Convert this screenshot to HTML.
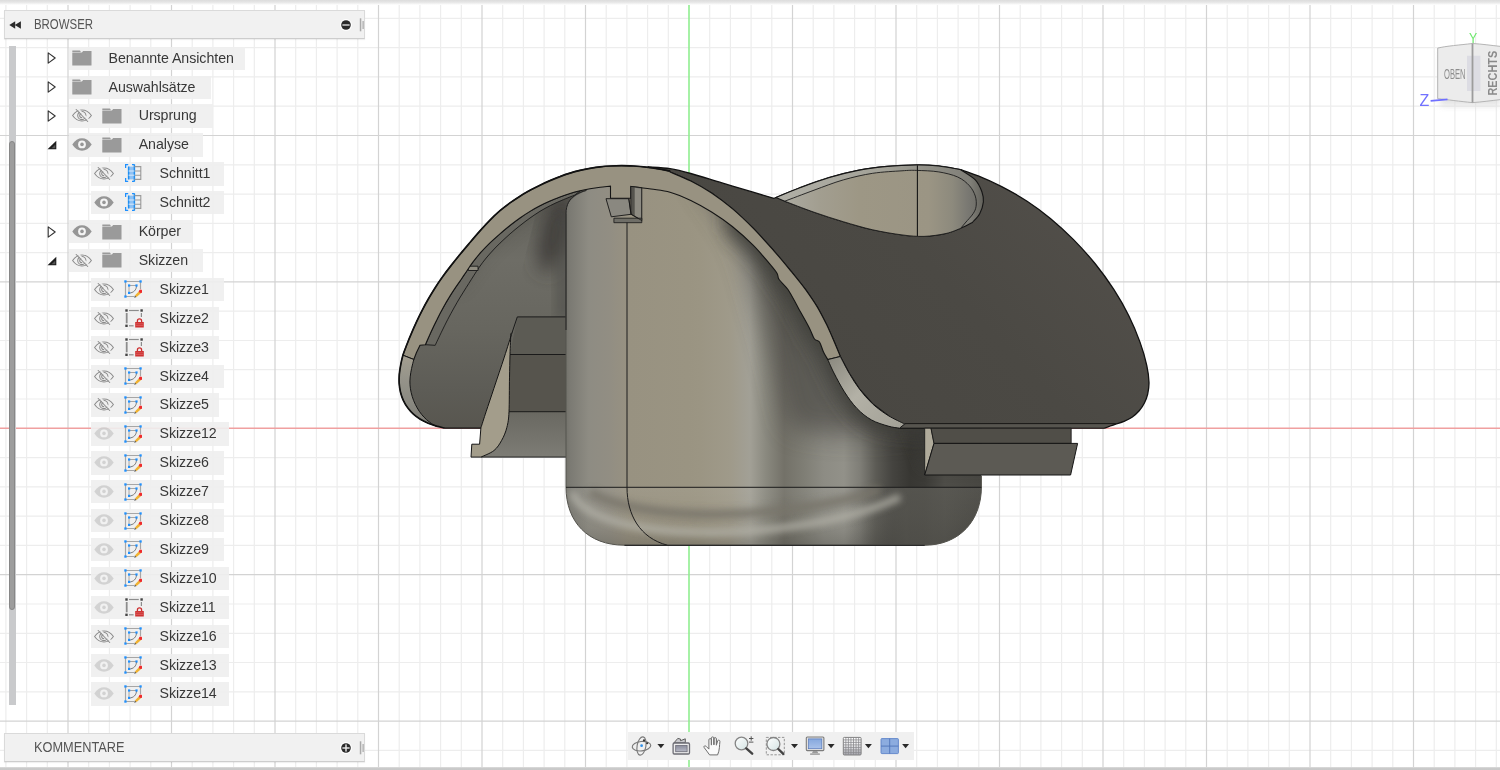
<!DOCTYPE html>
<html lang="de"><head><meta charset="utf-8"><title>Fusion</title>
<style>
html,body{margin:0;padding:0;background:#fff;overflow:hidden}
body{width:1500px;height:770px;position:relative;font-family:"Liberation Sans",sans-serif;color:#333}
#canvas{position:absolute;left:0;top:0;width:1500px;height:770px;will-change:transform}
#topstrip{position:absolute;left:0;top:0;width:1500px;height:5px;background:linear-gradient(#dcdcdc,#e6e6e6 45%,#fff)}
#botstrip{position:absolute;left:0;top:767px;width:1500px;height:3px;background:linear-gradient(#dedede,#cacaca 45%,#c8c8c8)}
</style></head><body>
<svg id="canvas" width="1500" height="770" viewBox="0 0 1500 770">
<path d="M5.9 0V770M26.6 0V770M47.3 0V770M88.7 0V770M109.4 0V770M130.1 0V770M150.8 0V770M192.2 0V770M212.9 0V770M233.6 0V770M254.3 0V770M295.7 0V770M316.4 0V770M337.1 0V770M357.8 0V770M399.2 0V770M419.9 0V770M440.6 0V770M461.3 0V770M502.7 0V770M523.4 0V770M544.1 0V770M564.8 0V770M606.2 0V770M626.9 0V770M647.6 0V770M668.3 0V770M709.7 0V770M730.4 0V770M751.1 0V770M771.8 0V770M813.2 0V770M833.9 0V770M854.6 0V770M875.3 0V770M916.7 0V770M937.4 0V770M958.1 0V770M978.8 0V770M1020.2 0V770M1040.9 0V770M1061.6 0V770M1082.3 0V770M1123.7 0V770M1144.4 0V770M1165.1 0V770M1185.8 0V770M1227.2 0V770M1247.9 0V770M1268.6 0V770M1289.3 0V770M1330.7 0V770M1351.4 0V770M1372.1 0V770M1392.8 0V770M1434.2 0V770M1454.9 0V770M1475.6 0V770M1496.3 0V770M0 18.4H1500M0 47.7H1500M0 76.9H1500M0 106.2H1500M0 164.8H1500M0 194.1H1500M0 223.3H1500M0 252.6H1500M0 311.2H1500M0 340.5H1500M0 369.7H1500M0 399.0H1500M0 457.6H1500M0 486.9H1500M0 516.1H1500M0 545.4H1500M0 604.0H1500M0 633.3H1500M0 662.5H1500M0 691.8H1500M0 750.4H1500" stroke="#ededed" stroke-width="1.2" fill="none"/>
<path d="M68.0 0V770M171.5 0V770M275.0 0V770M378.5 0V770M482.0 0V770M585.5 0V770M792.5 0V770M896.0 0V770M999.5 0V770M1103.0 0V770M1206.5 0V770M1310.0 0V770M1413.5 0V770M0 135.5H1500M0 281.9H1500M0 574.7H1500M0 721.1H1500" stroke="#d3d3d3" stroke-width="1.2" fill="none"/>
<path d="M0 428.3H1500" stroke="#f0a0a0" stroke-width="1.4" fill="none"/>
<path d="M689.0 0V770" stroke="#90ee90" stroke-width="1.6" fill="none"/>

<defs>
<linearGradient id="gcyl" gradientUnits="userSpaceOnUse" x1="566" y1="0" x2="981.4" y2="0">
<stop offset="0" stop-color="#74736c"/><stop offset="0.010" stop-color="#7b7a73"/><stop offset="0.055" stop-color="#8e8c83"/><stop offset="0.106" stop-color="#928e83"/><stop offset="0.152" stop-color="#989281"/><stop offset="0.294" stop-color="#9a9482"/><stop offset="0.323" stop-color="#9b9583"/><stop offset="0.395" stop-color="#9f9a8a"/><stop offset="0.443" stop-color="#a2a096"/><stop offset="0.481" stop-color="#8a897f"/><stop offset="0.525" stop-color="#737168"/><stop offset="0.573" stop-color="#7f7e75"/><stop offset="0.621" stop-color="#8d8c84"/><stop offset="0.669" stop-color="#929189"/><stop offset="0.708" stop-color="#7f7e77"/><stop offset="0.746" stop-color="#5c5b55"/><stop offset="0.785" stop-color="#454440"/><stop offset="0.828" stop-color="#383733"/><stop offset="0.864" stop-color="#3c3b37"/><stop offset="0.912" stop-color="#4e4d48"/><stop offset="1.000" stop-color="#484742"/>
</linearGradient>
<linearGradient id="gfil" gradientUnits="userSpaceOnUse" x1="0" y1="487" x2="0" y2="546">
<stop offset="0" stop-color="#fff" stop-opacity=".06"/><stop offset=".3" stop-color="#fff" stop-opacity=".03"/><stop offset=".7" stop-color="#000" stop-opacity=".04"/><stop offset="1" stop-color="#000" stop-opacity=".16"/>
</linearGradient>
<linearGradient id="gint" gradientUnits="userSpaceOnUse" x1="0" y1="200" x2="0" y2="430">
<stop offset="0" stop-color="#63625b"/><stop offset=".26" stop-color="#6e6d66"/><stop offset=".56" stop-color="#67665f"/><stop offset=".83" stop-color="#5d5c56"/><stop offset="1" stop-color="#58564f"/>
</linearGradient>
<linearGradient id="gblk" gradientUnits="userSpaceOnUse" x1="0" y1="411" x2="0" y2="457"><stop offset="0" stop-color="#696861"/><stop offset="1" stop-color="#7d7c75"/></linearGradient>
<linearGradient id="grim" gradientUnits="userSpaceOnUse" x1="780" y1="0" x2="985" y2="0"><stop offset="0" stop-color="#b0afa6"/><stop offset=".5" stop-color="#a3a298"/><stop offset=".8" stop-color="#8a8981"/><stop offset=".93" stop-color="#7f7e77"/><stop offset="1" stop-color="#5f5e58"/></linearGradient>
<linearGradient id="glipl" gradientUnits="userSpaceOnUse" x1="0" y1="356" x2="0" y2="428"><stop offset="0" stop-color="#a39e90"/><stop offset=".3" stop-color="#96948a"/><stop offset=".65" stop-color="#8a8981"/><stop offset="1" stop-color="#7a7972"/></linearGradient>
<linearGradient id="gshell" gradientUnits="userSpaceOnUse" x1="1100" y1="200" x2="850" y2="430"><stop offset="0" stop-color="#524f4a"/><stop offset=".5" stop-color="#4b4944"/><stop offset="1" stop-color="#494742"/></linearGradient>
<linearGradient id="gfilr" gradientUnits="userSpaceOnUse" x1="850" y1="0" x2="985" y2="0"><stop offset="0" stop-color="#5c5b55" stop-opacity="0"/><stop offset=".42" stop-color="#5c5b55" stop-opacity=".7"/><stop offset=".62" stop-color="#5a5953" stop-opacity=".7"/><stop offset="1" stop-color="#55544e" stop-opacity=".3"/></linearGradient>
<linearGradient id="gscoop" gradientUnits="userSpaceOnUse" x1="780" y1="0" x2="978" y2="0">
<stop offset="0" stop-color="#adaca3"/><stop offset=".2" stop-color="#a29e90"/><stop offset=".4" stop-color="#9d9785"/><stop offset=".75" stop-color="#9b9584"/><stop offset=".87" stop-color="#8d8a7d"/><stop offset=".95" stop-color="#797872"/><stop offset="1" stop-color="#6f6e68"/>
</linearGradient>
<linearGradient id="glipr" gradientUnits="userSpaceOnUse" x1="830" y1="360" x2="900" y2="428">
<stop offset="0" stop-color="#8d8b81"/><stop offset=".45" stop-color="#b3b1a6"/><stop offset="1" stop-color="#a3a197"/>
</linearGradient>
<filter id="blur12" x="-30%" y="-30%" width="160%" height="160%"><feGaussianBlur stdDeviation="13"/></filter>
<filter id="blur9" x="-30%" y="-30%" width="160%" height="160%"><feGaussianBlur stdDeviation="9"/></filter>
<filter id="blur4" x="-30%" y="-100%" width="160%" height="300%"><feGaussianBlur stdDeviation="3.500"/></filter>
<filter id="blur6" x="-30%" y="-30%" width="160%" height="160%"><feGaussianBlur stdDeviation="6"/></filter>
<clipPath id="ccyl"><path id="cylp" d="M566 487V214C566 203 571 197 586.4 190.500L600 176L700 185L800 285L850 400L900 426H981.4V487C981.4 520 960 545.2 924.7 545.2H624.4C588 545.2 566 522 566 487Z"/></clipPath>
<clipPath id="cint"><path id="intp" d="M444.8 428.2C443.4 427.8 439.2 426.9 436.5 426.1C433.7 425.2 430.9 424.3 428.2 423.2C425.5 422.0 422.8 420.8 420.3 419.2C417.9 417.7 415.5 416.0 413.4 414.1C411.3 412.2 409.4 410.0 407.7 407.7C406.0 405.4 404.5 402.9 403.3 400.3C402.1 397.7 401.2 395.0 400.5 392.2C399.8 389.4 399.4 386.5 399.2 383.5C399.0 380.5 399.1 377.5 399.3 374.4C399.6 371.3 400.1 368.1 400.7 364.9C401.3 361.7 401.9 358.5 402.9 355.2C403.9 351.9 405.2 348.8 406.6 345.3C407.9 341.9 409.3 338.2 411.0 334.4C412.6 330.5 414.4 326.4 416.3 322.3C418.2 318.2 420.3 313.9 422.4 309.9C424.5 305.8 426.7 301.8 428.9 298.0C431.1 294.2 433.3 290.7 435.5 287.2C437.8 283.6 440.1 280.3 442.6 276.8C445.1 273.3 447.8 269.7 450.8 265.9C453.7 262.2 456.9 258.2 460.1 254.3C463.3 250.4 466.7 246.4 470.0 242.5C473.3 238.6 476.7 234.6 480.0 230.9C483.3 227.2 486.7 223.4 490.0 220.1C493.3 216.7 496.7 213.6 500.0 210.7C503.3 207.9 506.7 205.3 510.0 202.9C513.3 200.5 516.7 198.3 520.0 196.2C523.3 194.1 526.7 192.2 530.0 190.3C533.3 188.5 536.7 186.8 540.0 185.2C543.3 183.6 546.7 182.0 550.0 180.6C553.3 179.2 556.7 177.8 560.0 176.6C563.3 175.3 566.7 174.1 570.0 173.1C573.3 172.1 576.7 171.2 580.0 170.4C583.3 169.6 586.7 168.9 590.0 168.3C593.3 167.8 596.6 167.3 600.1 166.9C603.5 166.5 606.8 166.2 610.4 166.0C614.0 165.8 617.7 165.6 621.6 165.6C625.4 165.6 629.6 165.8 633.7 166.0C637.8 166.3 642.2 166.7 646.3 167.2C650.4 167.7 654.5 168.3 658.5 169.0C662.4 169.6 668.1 170.7 670.0 171.0L670 430L481 428.2Z"/></clipPath>
</defs>
<g stroke-linejoin="round">
<use href="#intp" fill="url(#gint)"/>
<g clip-path="url(#cint)">
<path d="M455.8 287.1C456.7 285.8 459.5 281.8 461.3 279.2C463.1 276.5 464.8 274.0 466.7 271.2C468.6 268.4 470.4 265.5 472.7 262.4C475.0 259.3 477.7 256.0 480.5 252.7C483.4 249.4 486.8 246.0 490.0 242.8C493.3 239.7 496.7 236.7 500.0 233.8C503.4 230.9 506.7 228.2 510.0 225.5C513.3 222.9 516.7 220.3 520.0 218.0C523.3 215.6 526.7 213.4 530.0 211.4C533.4 209.3 536.7 207.5 540.0 205.8C543.4 204.0 546.7 202.4 550.0 201.0C553.4 199.5 556.7 198.2 560.0 196.9C563.3 195.7 566.7 194.5 570.0 193.5C573.3 192.5 576.7 191.6 580.0 190.8C583.3 190.0 586.7 189.3 590.0 188.7C593.4 188.1 596.8 187.6 600.2 187.2C603.6 186.8 608.8 186.3 610.5 186.1L620 150L440 150L440 280Z" fill="#3d3c38" filter="url(#blur9)" transform="translate(2,2)" opacity=".35"/>
<ellipse cx="555" cy="232" rx="14" ry="42" fill="#3f3e3a" filter="url(#blur9)" opacity=".95" transform="rotate(14 555 232)"/>
<rect x="556" y="215" width="14" height="105" fill="#4a4944" filter="url(#blur6)" opacity=".55"/>
<path d="M425.4 344.7C426.3 342.6 429.0 336.4 430.9 332.2C432.8 328.1 434.8 323.9 436.9 319.8C438.9 315.6 441.1 311.4 443.3 307.5C445.4 303.6 447.7 299.8 449.8 296.4C451.9 292.9 453.9 289.9 455.8 287.1C457.8 284.2 459.5 281.8 461.3 279.2C463.1 276.5 464.8 274.0 466.7 271.2C468.6 268.4 470.4 265.5 472.7 262.4C475.0 259.3 477.7 256.0 480.5 252.7C483.4 249.4 486.8 246.0 490.0 242.8C493.3 239.7 496.7 236.7 500.0 233.8C503.4 230.9 506.7 228.2 510.0 225.5C513.3 222.9 516.7 220.3 520.0 218.0C523.3 215.6 526.7 213.4 530.0 211.4C533.4 209.3 536.7 207.5 540.0 205.8C543.4 204.0 546.7 202.4 550.0 201.0C553.4 199.5 556.7 198.2 560.0 196.9C563.3 195.7 566.7 194.5 570.0 193.5C573.3 192.5 578.3 191.2 580.0 190.8L575.0 195.0C572.8 195.9 566.0 198.5 561.9 200.3C557.8 202.0 554.0 203.7 550.3 205.6C546.7 207.4 543.4 209.3 540.0 211.3C536.7 213.4 533.4 215.6 530.0 218.0C526.7 220.4 523.3 222.9 520.0 225.6C516.7 228.2 513.3 231.0 510.0 233.9C506.7 236.9 503.3 239.9 500.0 243.1C496.8 246.3 493.4 249.7 490.5 253.0C487.5 256.3 484.8 259.7 482.4 262.8C480.0 266.0 478.1 269.0 476.2 271.8C474.4 274.6 472.9 277.0 471.2 279.7C469.5 282.3 468.0 284.7 466.2 287.6C464.4 290.5 462.4 293.6 460.3 297.0C458.3 300.3 456.1 304.1 454.0 307.9C451.9 311.7 449.7 315.6 447.6 319.7C445.5 323.7 443.5 327.9 441.4 332.2C439.3 336.5 436.2 343.1 435.2 345.3Z" fill="#696861" stroke="#1a1a1a" stroke-width=".9"/>
<path d="M468.300 266.200H478V270.500H468.300z" fill="#8f8c80" stroke="#1a1a1a" stroke-width=".9"/>
</g>
<path d="M517.3 316.9H567V354.5H510z" fill="#5c5b54"/>
<path d="M509 354.5H567V411.7H508z" fill="#56544d"/>
<path d="M508 411.7H567V457.1H480z" fill="url(#gblk)"/>
<path d="M517.3 316.9H567M510 354.5H567M509 411.7H567M480.9 457.1H567M517.3 316.9L512.1 332.5" stroke="#1a1a1a" stroke-width="1" fill="none"/>
<use href="#cylp" fill="url(#gcyl)"/>
<g clip-path="url(#ccyl)">
<rect x="560" y="487.3" width="430" height="60" fill="url(#gfil)"/>
<rect x="850" y="487.3" width="140" height="60" fill="url(#gfilr)"/>
<path d="M700.0 185.0C703.7 190.0 715.0 204.2 722.0 215.0C729.0 225.8 736.2 235.8 742.0 250.0C747.8 264.2 752.3 284.2 757.0 300.0C761.7 315.8 765.7 328.3 770.0 345.0C774.3 361.7 779.7 386.2 783.0 400.0C786.3 413.8 788.8 423.3 790.0 428.0L830.0 434.0L880.0 434.0L925.0 430.0L995.0 430.0L995.0 150.0L700.0 150.0Z" fill="#4d4c47" filter="url(#blur12)" opacity=".72"/>
<path d="M732.3 226.5C735.8 229.6 746.9 239.0 753.1 245.2C759.3 251.4 765.7 259.2 769.7 263.9C773.7 268.6 775.4 270.6 777.0 273.2C778.6 275.8 777.2 276.7 779.1 279.5C781.0 282.3 785.0 285.1 788.3 290.0C791.6 294.9 795.2 302.5 798.7 308.7C802.2 314.9 806.5 322.4 809.1 327.4C811.7 332.4 812.6 336.4 814.3 338.8C816.0 341.2 818.0 339.8 819.5 342.0C821.0 344.2 822.2 349.4 823.6 352.3C825.0 355.2 827.1 358.4 827.8 359.6C828.8 361.9 831.2 367.7 834.0 373.1C836.8 378.5 840.6 385.9 844.4 391.8C848.2 397.7 852.4 403.7 856.9 408.4C861.4 413.1 866.2 416.9 871.4 419.9C876.6 422.8 883.4 424.7 888.1 426.1C892.8 427.5 897.6 427.9 899.5 428.2L990 432L990 150L732 150Z" fill="#3b3a36" filter="url(#blur9)" transform="translate(-6,5)" opacity=".8"/>
<path d="M590 492C640 522 780 522 880 490" fill="none" stroke="#78746a" stroke-width="9" filter="url(#blur4)" opacity=".85"/>
<path d="M572 492C590 545 800 545 900 497" fill="none" stroke="#b2b1a7" stroke-width="7" filter="url(#blur4)" opacity=".85"/>
<path d="M905 424H990V470H922z" fill="#383734" opacity=".5" filter="url(#blur6)"/>
</g>
<path d="M566 214V487C566 522 588 545.2 624.4 545.2H924.7C960 545.2 981.4 520 981.4 487V476" stroke="#55544e" stroke-width="1" fill="none"/>
<path d="M566 487.3H981.4" stroke="#1c1c1c" stroke-width="1" fill="none"/>
<path d="M627 222V487.3C627 515 640 538 667.300 545.2" stroke="#1c1c1c" stroke-width="1" fill="none"/>
<path d="M624.4 545.4H924.7" stroke="#2a2a2a" stroke-width="1.2" fill="none"/>
<path d="M566 330V214C566 204 570 199 573.900 196.100C578 193 582 191.500 586.400 190.500" stroke="#222" stroke-width="1" fill="none"/>
<path d="M648.0 167.0C651.7 167.3 662.9 167.6 670.0 168.7C677.1 169.8 682.1 171.1 690.8 173.5C699.5 175.9 711.6 179.8 722.0 182.9C732.4 186.0 744.5 189.6 753.1 192.2C761.8 194.8 770.4 197.4 773.9 198.4C779.8 195.9 790.5 191.3 799.3 188.0C808.1 184.7 818.9 180.6 828.7 177.7C838.5 174.8 848.2 172.3 858.0 170.4C867.8 168.5 877.5 167.3 887.3 166.4C897.1 165.5 908.1 165.1 916.7 165.0C925.3 164.9 931.4 165.2 938.7 166.0C946.0 166.8 957.0 169.1 960.7 169.7C963.6 170.7 971.4 173.1 978.2 175.9C985.1 178.7 993.5 182.4 1001.7 186.6C1009.8 190.8 1018.9 195.9 1027.1 201.3C1035.3 206.7 1043.0 212.4 1050.7 218.7C1058.4 225.1 1065.9 232.0 1073.3 239.4C1080.7 246.9 1088.2 255.2 1095.0 263.5C1101.7 271.8 1108.1 280.7 1113.8 289.4C1119.4 298.1 1124.5 306.9 1128.8 315.7C1133.2 324.5 1137.0 333.8 1140.0 342.1C1143.0 350.4 1145.4 358.9 1146.8 365.6C1148.3 372.4 1148.9 377.9 1149.0 382.6C1149.1 387.4 1148.4 390.7 1147.7 394.1C1146.9 397.5 1145.8 400.2 1144.4 403.0C1143.0 405.8 1141.3 408.4 1139.2 410.8C1137.1 413.2 1134.5 415.5 1132.0 417.3C1129.5 419.1 1126.8 420.2 1124.0 421.4C1121.2 422.6 1118.3 423.3 1115.0 424.4C1111.7 425.5 1105.8 427.6 1104.0 428.2L899.5 428.2L888.1 415.5L872.5 403.8L859.5 389.2L849.1 373.1L840.3 356.5L834.4 342.2L826.8 325.0L817.2 306.9L805.8 289.9L791.4 271.7L773.4 250.3L753.1 228.2L732.3 208.7L711.6 193.0L690.8 181.1L670.0 172.0Z" fill="url(#gshell)" stroke="#111" stroke-width="1.3"/>
<path d="M904.7 423.600H1116" stroke="#1d1c1a" stroke-width="1.300" fill="none"/>
<path d="M900 427.600L906 424.300H1113L1104 427.600z" fill="#57554f"/>
<path d="M775.9 197.5C779.8 195.9 790.5 191.3 799.3 188.0C808.1 184.7 818.9 180.6 828.7 177.7C838.5 174.8 848.2 172.3 858.0 170.4C867.8 168.5 877.5 167.3 887.3 166.4C897.1 165.5 908.1 165.1 916.7 165.0C925.3 164.9 931.4 165.2 938.7 166.0C946.0 166.8 957.0 169.1 960.7 169.7C963.1 171.4 971.8 176.2 975.3 179.9C978.8 183.6 980.5 188.0 981.9 191.7C983.2 195.4 983.8 198.2 983.4 201.9C983.0 205.6 981.5 210.3 979.7 213.7C977.9 217.1 973.6 221.0 972.4 222.5C970.5 223.5 965.1 226.5 960.7 228.3C956.3 230.1 952.1 232.2 946.0 233.5C939.9 234.8 931.3 236.2 924.0 236.4C916.7 236.6 910.5 236.0 902.0 234.9C893.5 233.8 882.5 232.0 872.7 229.8C862.9 227.6 853.1 224.6 843.3 221.7C833.5 218.8 823.8 215.6 814.0 212.2C804.2 208.8 789.6 203.0 784.7 201.2Z" fill="url(#grim)" stroke="#151515" stroke-width="1.1"/>
<path d="M784.7 201.2C789.6 199.4 804.2 193.8 814.0 190.2C823.8 186.6 833.5 182.7 843.3 179.9C853.1 177.1 862.9 174.8 872.7 173.3C882.5 171.8 894.7 171.3 902.0 170.8C909.3 170.3 910.6 170.2 916.7 170.4C922.8 170.6 931.9 170.8 938.7 171.9C945.5 173.0 952.6 174.7 957.7 177.0C962.8 179.3 966.6 182.6 969.5 185.8C972.4 189.0 974.2 192.7 975.3 196.1C976.4 199.5 976.5 203.4 976.1 206.3C975.7 209.2 974.8 211.1 973.1 213.7C971.4 216.3 967.2 220.6 966.0 222.0L960.7 228.3C958.2 229.2 952.1 232.2 946.0 233.5C939.9 234.8 931.3 236.2 924.0 236.4C916.7 236.6 910.5 236.0 902.0 234.9C893.5 233.8 882.5 232.0 872.7 229.8C862.9 227.6 853.1 224.6 843.3 221.7C833.5 218.8 823.8 215.6 814.0 212.2C804.2 208.8 789.6 203.0 784.7 201.2Z" fill="url(#gscoop)" stroke="#1c1c1c" stroke-width=".9"/>
<path d="M917.4 165.3V235.900" stroke="#151515" stroke-width="1.1" fill="none"/>
<path d="M402.9 355.2C403.5 353.6 405.2 348.8 406.6 345.3C407.9 341.9 409.3 338.2 411.0 334.4C412.6 330.5 414.4 326.4 416.3 322.3C418.2 318.2 420.3 313.9 422.4 309.9C424.5 305.8 426.7 301.8 428.9 298.0C431.1 294.2 433.3 290.7 435.5 287.2C437.8 283.6 440.1 280.3 442.6 276.8C445.1 273.3 447.8 269.7 450.8 265.9C453.7 262.2 456.9 258.2 460.1 254.3C463.3 250.4 466.7 246.4 470.0 242.5C473.3 238.6 476.7 234.6 480.0 230.9C483.3 227.2 486.7 223.4 490.0 220.1C493.3 216.7 496.7 213.6 500.0 210.7C503.3 207.9 506.7 205.3 510.0 202.9C513.3 200.5 516.7 198.3 520.0 196.2C523.3 194.1 526.7 192.2 530.0 190.3C533.3 188.5 536.7 186.8 540.0 185.2C543.3 183.6 546.7 182.0 550.0 180.6C553.3 179.2 556.7 177.8 560.0 176.6C563.3 175.3 566.7 174.1 570.0 173.1C573.3 172.1 576.7 171.2 580.0 170.4C583.3 169.6 586.7 168.9 590.0 168.3C593.3 167.8 596.6 167.3 600.1 166.9C603.5 166.5 606.8 166.2 610.4 166.0C614.0 165.8 617.7 165.6 621.6 165.6C625.4 165.6 629.6 165.8 633.7 166.0C637.8 166.3 642.2 166.7 646.3 167.2C650.4 167.7 654.5 168.3 658.5 169.0C662.4 169.6 668.1 170.7 670.0 171.0L670.0 172.0C673.5 173.5 683.9 177.6 690.8 181.1C697.7 184.6 704.6 188.4 711.6 193.0C718.5 197.6 725.4 202.9 732.3 208.7C739.3 214.6 746.3 221.3 753.1 228.2C759.9 235.1 767.0 243.1 773.4 250.3C779.8 257.5 786.0 265.1 791.4 271.7C796.8 278.3 801.5 284.0 805.8 289.9C810.0 295.8 813.7 301.1 817.2 306.9C820.7 312.8 823.9 319.2 826.8 325.0C829.6 330.9 832.2 337.0 834.4 342.2C836.7 347.4 839.3 354.1 840.3 356.5L827.8 359.6C827.1 358.4 825.0 355.2 823.6 352.3C822.2 349.4 821.0 344.2 819.5 342.0C818.0 339.8 816.0 341.2 814.3 338.8C812.6 336.4 811.7 332.4 809.1 327.4C806.5 322.4 802.2 314.9 798.7 308.7C795.2 302.5 791.6 294.9 788.3 290.0C785.0 285.1 781.0 282.3 779.1 279.5C777.2 276.7 778.6 275.8 777.0 273.2C775.4 270.6 773.7 268.6 769.7 263.9C765.7 259.2 759.3 251.4 753.1 245.2C746.9 239.0 739.2 232.0 732.3 226.5C725.4 221.0 718.5 216.3 711.6 212.0C704.7 207.7 697.7 203.8 690.8 200.5C683.9 197.2 676.6 194.1 670.0 192.2C663.4 190.3 657.5 190.0 651.0 189.0C644.5 188.0 634.2 186.8 630.8 186.4V198.2H610.5V186.1C608.8 186.3 603.6 186.8 600.2 187.2C596.8 187.6 593.4 188.1 590.0 188.7C586.7 189.3 583.3 190.0 580.0 190.8C576.7 191.6 573.3 192.5 570.0 193.5C566.7 194.5 563.3 195.7 560.0 196.9C556.7 198.2 553.4 199.5 550.0 201.0C546.7 202.4 543.4 204.0 540.0 205.8C536.7 207.5 533.4 209.3 530.0 211.4C526.7 213.4 523.3 215.6 520.0 218.0C516.7 220.3 513.3 222.9 510.0 225.5C506.7 228.2 503.4 230.9 500.0 233.8C496.7 236.7 493.3 239.7 490.0 242.8C486.8 246.0 483.4 249.4 480.5 252.7C477.7 256.0 475.0 259.3 472.7 262.4C470.4 265.5 468.6 268.4 466.7 271.2C464.8 274.0 463.1 276.5 461.3 279.2C459.5 281.8 457.8 284.2 455.8 287.1C453.9 289.9 451.9 292.9 449.8 296.4C447.7 299.8 445.4 303.6 443.3 307.5C441.1 311.4 438.9 315.6 436.9 319.8C434.8 323.9 432.8 328.1 430.9 332.2C429.0 336.4 426.3 342.6 425.4 344.7L420.0 345.3L416.5 352.5L413.8 359.5Z" fill="#989281" stroke="#151515" stroke-width="1.1"/>
<path d="M402.9 355.2C402.5 356.8 401.3 361.7 400.7 364.9C400.1 368.1 399.6 371.3 399.3 374.4C399.1 377.5 399.0 380.5 399.2 383.5C399.4 386.5 399.8 389.4 400.5 392.2C401.2 395.0 402.1 397.7 403.3 400.3C404.5 402.9 406.0 405.4 407.7 407.7C409.4 410.0 411.3 412.2 413.4 414.1C415.5 416.0 417.9 417.7 420.3 419.2C422.8 420.8 425.5 422.0 428.2 423.2C430.9 424.3 435.1 425.6 436.5 426.1C435.7 426.2 433.1 424.7 431.5 423.5C429.8 422.3 428.1 421.0 426.4 419.5C424.8 418.0 423.1 416.3 421.6 414.4C420.1 412.5 418.5 410.3 417.2 407.9C415.9 405.6 414.6 403.1 413.6 400.5C412.6 398.0 411.8 395.3 411.2 392.7C410.6 390.1 410.2 387.5 410.0 384.8C409.8 382.2 409.9 379.6 410.2 376.9C410.4 374.1 411.0 371.3 411.6 368.4C412.2 365.5 413.4 361.0 413.8 359.5Z" fill="url(#glipl)" stroke="#151515" stroke-width="1"/>
<path d="M840.3 356.5C841.8 359.3 845.9 367.7 849.1 373.1C852.3 378.6 855.6 384.1 859.5 389.2C863.4 394.3 867.7 399.4 872.5 403.8C877.2 408.2 882.7 412.1 888.1 415.5C893.4 418.8 901.9 422.6 904.7 424.0L899.5 428.2C897.6 427.9 892.8 427.5 888.1 426.1C883.4 424.7 876.6 422.8 871.4 419.9C866.2 416.9 861.4 413.1 856.9 408.4C852.4 403.7 848.2 397.7 844.4 391.8C840.6 385.9 836.8 378.5 834.0 373.1C831.2 367.7 828.8 361.9 827.8 359.6Z" fill="url(#glipr)" stroke="#151515" stroke-width="1"/>
<path d="M444.8 428.2C443.4 427.8 439.2 426.9 436.5 426.1C433.7 425.2 430.9 424.3 428.2 423.2C425.5 422.0 422.8 420.8 420.3 419.2C417.9 417.7 415.5 416.0 413.4 414.1C411.3 412.2 409.4 410.0 407.7 407.7C406.0 405.4 404.5 402.9 403.3 400.3C402.1 397.7 401.2 395.0 400.5 392.2C399.8 389.4 399.4 386.5 399.2 383.5C399.0 380.5 399.1 377.5 399.3 374.4C399.6 371.3 400.1 368.1 400.7 364.9C401.3 361.7 401.9 358.5 402.9 355.2C403.9 351.9 405.2 348.8 406.6 345.3C407.9 341.9 409.3 338.2 411.0 334.4C412.6 330.5 414.4 326.4 416.3 322.3C418.2 318.2 420.3 313.9 422.4 309.9C424.5 305.8 426.7 301.8 428.9 298.0C431.1 294.2 433.3 290.7 435.5 287.2C437.8 283.6 440.1 280.3 442.6 276.8C445.1 273.3 447.8 269.7 450.8 265.9C453.7 262.2 456.9 258.2 460.1 254.3C463.3 250.4 466.7 246.4 470.0 242.5C473.3 238.6 476.7 234.6 480.0 230.9C483.3 227.2 486.7 223.4 490.0 220.1C493.3 216.7 496.7 213.6 500.0 210.7C503.3 207.9 506.7 205.3 510.0 202.9C513.3 200.5 516.7 198.3 520.0 196.2C523.3 194.1 526.7 192.2 530.0 190.3C533.3 188.5 536.7 186.8 540.0 185.2C543.3 183.6 546.7 182.0 550.0 180.6C553.3 179.2 556.7 177.8 560.0 176.6C563.3 175.3 566.7 174.1 570.0 173.1C573.3 172.1 576.7 171.2 580.0 170.4C583.3 169.6 586.7 168.9 590.0 168.3C593.3 167.8 596.6 167.3 600.1 166.9C603.5 166.5 606.8 166.2 610.4 166.0C614.0 165.8 617.7 165.6 621.6 165.6C625.4 165.6 629.6 165.8 633.7 166.0C637.8 166.3 642.2 166.7 646.3 167.2C650.4 167.7 654.5 168.3 658.5 169.0C662.4 169.6 668.1 170.7 670.0 171.0" fill="none" stroke="#111" stroke-width="1.7"/>
<path d="M444.8 428.2H481" stroke="#111" stroke-width="1.2" fill="none"/>
<path d="M630.8 186.4L641.800 187.700V220.500L630.800 214z" fill="#55544e" stroke="#151515" stroke-width=".8"/>
<path d="M634.700 187.800L641 188.500V219.500L634.700 215.500z" fill="#8d8b82"/>
<path d="M606 198.700H628.800L631 214.300L611.300 216.800z" fill="#8a8880" stroke="#151515" stroke-width=".9"/>
<path d="M613.900 218.200H641.800V222.700H613.900z" fill="#6f6e67" stroke="#151515" stroke-width=".8"/>
<path d="M628.800 198.700L631 214.300L641.800 220.500" fill="none" stroke="#151515" stroke-width=".8"/>
<path d="M512.1 332.5C510.8 336.6 507.3 347.8 504.3 357.1C501.3 366.4 496.9 379.2 493.9 388.3C490.9 397.4 488.3 405.1 486.1 411.7C483.9 418.3 481.8 425.1 480.9 427.8L479.6 444.2H471.8L471 457.1H480.9C483.1 456.0 490.4 453.4 493.9 450.6C497.4 447.8 499.5 444.2 501.7 440.3C503.9 436.4 505.7 432.1 506.9 427.3C508.1 422.5 508.6 419.9 509.0 411.7C509.4 403.5 509.3 387.4 509.5 377.9C509.7 368.4 509.8 361.9 510.0 354.5C510.2 347.1 510.7 337.2 510.8 333.8Z" fill="#a39d8b" stroke="#151515" stroke-width="1"/>
<path d="M924.7 428.2L931 428.2L934 443.4L924.7 475z" fill="#b0ab9b" stroke="#151515" stroke-width=".8"/>
<path d="M931 428.2H1071.2V443.4H934z" fill="#504e48" stroke="#151515" stroke-width=".8"/>
<path d="M934 443.4H1077.6L1070.6 475H924.7z" fill="#5c5a54" stroke="#151515" stroke-width="1"/>
</g>
<defs><filter id="cb" x="-30%" y="-30%" width="160%" height="160%"><feGaussianBlur stdDeviation="3"/></filter></defs>
<g>
<path d="M1440 52H1500V106H1440z" fill="#d9d9d9" filter="url(#cb)" opacity=".7"/>
<path d="M1437.700 48.100C1446 46 1460 45 1472.500 43.500V102.600C1460 101.500 1447 99.500 1437.700 98.700z" fill="#ececec" stroke="#b4b4b4" stroke-width="1"/>
<path d="M1472.500 43.500C1482 44 1492 45.500 1500.500 46.400V99.600C1492 100.500 1482 102 1472.500 102.600z" fill="#ebebeb" stroke="#b4b4b4" stroke-width="1"/>
<rect x="1467" y="55.700" width="13.400" height="35.300" fill="#dcdce3"/>
<path d="M1472.500 43.500V102.600" stroke="#9c9c9c" stroke-width="1.800" fill="none"/>
<text x="0" y="0" transform="translate(1444.100 79) scale(.49 1)" font-family="Liberation Sans, sans-serif" font-size="15.500" fill="#8e8e8e">OBEN</text>
<text x="0" y="0" transform="translate(1496.800 95.600) rotate(-90) scale(.91 1)" font-family="Liberation Sans, sans-serif" font-weight="bold" font-size="12" fill="#8a8a8a">RECHTS</text>
<text x="1469" y="43" font-family="Liberation Sans, sans-serif" font-size="14.500" fill="#6be86b" transform="translate(1469 43) scale(.85 1) translate(-1469 -43)">Y</text>
<text x="1419.500" y="106.300" font-family="Liberation Sans, sans-serif" font-size="16" fill="#7272ff">Z</text>
<path d="M1430.600 100.900L1447.500 99.400" stroke="#7070ff" stroke-width="1.800" fill="none"/>
</g>

</svg>
<div id="topstrip"></div><div id="botstrip"></div>
<style>
#panel{position:absolute;left:0;top:0;width:380px;height:770px;will-change:transform}
.hdr{position:absolute;left:3.700px;width:361px;height:29px;background:#f1f1f1;border:1px solid #dadada;border-bottom-color:#cdcdcd;box-sizing:border-box;box-shadow:0 1px 1px rgba(0,0,0,.06)}
.hdr .t{position:absolute;left:29.800px;top:-1px;line-height:28px;font-size:14px;color:#555;transform:scaleX(.816);transform-origin:0 50%;white-space:nowrap}
.row{position:absolute;height:23.400px;background:rgba(238,238,238,.9)}
.row .t{position:absolute;top:0;line-height:23.400px;font-size:14.200px;letter-spacing:-.05px;color:#383838;white-space:nowrap}
.ic{position:absolute}
.arr{position:absolute;left:47px}
#sbtrack{position:absolute;left:8.5px;top:46px;width:7px;height:658.5px;background:#c9cacc}
#sbthumb{position:absolute;left:9px;top:141px;width:6px;height:469px;background:#9d9d9d;border:1px solid #878787;border-radius:3px;box-sizing:border-box}
</style>
<svg width="0" height="0" style="position:absolute">
<defs>
<symbol id="i-folder" viewBox="0 0 20 16"><path d="M0.3 0.4h7.6l1 1.6H0.3z" fill="#9a9a9a"/><path d="M0.3 2.6h9.6l1.2-1.6h8.4v14.4H0.3z" fill="#9a9a9a"/></symbol>
<symbol id="i-vis" viewBox="0 0 20 13"><path d="M0.3 6.5C3 2.2 6.4 0.3 10 0.3s7 1.9 9.7 6.2C17 10.8 13.600 12.700 10 12.700S3 10.800 0.300 6.500z" fill="#969696"/><circle cx="10" cy="6.4" r="3.900" fill="#f4f4f4"/><circle cx="10" cy="6.400" r="1.800" fill="#969696"/></symbol>
<symbol id="i-hid" viewBox="0 0 20 13"><g fill="none" stroke="#8c8c8c" stroke-width="1.050" stroke-linecap="round"><path d="M0.600 6.500C3.200 2.700 6.500 1 10 1s6.800 1.700 9.400 5.500C16.800 10.300 13.500 12 10 12S3.200 10.300 0.600 6.500z"/><circle cx="9.800" cy="6.500" r="4.100"/><path d="M9.800 4.400A2.100 2.100 0 0 0 9.800 8.600"/><path d="M5.700 -0.400L17.200 11.600" stroke="#efefef" stroke-width="1.700" stroke-linecap="butt"/><path d="M4.200 0.500L15.700 12.500"/></g></symbol>
<symbol id="i-sk" viewBox="0 0 18 18"><g fill="none" stroke="#a6a6a6" stroke-width="1.200"><path d="M1.500 1.500H16.500M16.500 1.500V9M1.500 1.500V16.500M1.500 16.500H10"/><path d="M5 5.500V13M5 5.500H12.500" stroke-width="1"/><path d="M12.500 5.500C12.500 10 9.500 13 5 13" stroke="#777" stroke-width="1"/></g><g fill="#1e90ff"><rect x="0.300" y="0.300" width="2.300" height="2.300"/><rect x="15.400" y="0.300" width="2.300" height="2.300"/><rect x="0.300" y="15.400" width="2.300" height="2.300"/><rect x="4" y="4.400" width="2.200" height="2.200"/><rect x="11.400" y="4.400" width="2.200" height="2.200"/><rect x="4" y="11.800" width="2.200" height="2.200"/></g><path d="M10.200 17.800l0.700-2.400 1.700 1.600z" fill="#444"/><path d="M10.900 15.400L15 11.300l1.900 1.900L12.600 17z" fill="#f0b232"/><circle cx="16.600" cy="11.300" r="1.700" fill="#ee2b2b"/></symbol>
<symbol id="i-lk" viewBox="0 0 20 19"><g fill="#444"><rect x="0.300" y="0.300" width="2.400" height="2.400"/><rect x="15.400" y="0.300" width="2.400" height="2.400"/><rect x="0.300" y="15.600" width="2.400" height="2.400"/></g><g stroke="#8c8c8c" fill="none"><path d="M4 1.500H13.800" stroke-width="1.200"/><path d="M1.700 4V14.300" stroke-width="1.800"/><path d="M16.400 4V8" stroke-width="1.200"/><path d="M4 16.800H8.600" stroke-width="1.200"/></g><path d="M12.400 13.200v-1.300a2.100 2.100 0 0 1 4.200 0v1.300" fill="none" stroke="#cc2d2d" stroke-width="1.300"/><rect x="10.200" y="13" width="8.600" height="5.500" fill="#cf3333"/><path d="M10.900 14.800H18.200M10.900 16.500H18.200" stroke="#e07878" stroke-width=".5"/></symbol>
<symbol id="i-sect" viewBox="0 0 17 18"><path d="M3.200 0.600H0.600V4M0.600 14V17.400H3.200M7 0.600H9.600M7 17.400H9.600" fill="none" stroke="#1e90ff" stroke-width="1.300"/><rect x="3.600" y="2.600" width="5.800" height="12.800" fill="#8fc1f3"/><path d="M3.600 2.600V15.400M9.400 0.600V17.400" stroke="#1e8ef0" stroke-width="1.500" fill="none"/><path d="M3.600 7H9.400M3.600 11.200H9.400" stroke="#d8ebff" stroke-width="1" fill="none"/><path d="M9.400 2.600H15.800V15.400H9.400M9.400 7H15.800M9.400 11.200H15.800" fill="none" stroke="#9a9a9a" stroke-width="1.100"/></symbol>
<symbol id="i-ac" viewBox="0 0 10 12"><path d="M1.200 0.900L8.200 6 1.200 11.100z" fill="#fff" stroke="#333" stroke-width="1.100" stroke-linejoin="round"/></symbol>
<symbol id="i-ao" viewBox="0 0 10 10"><path d="M0.500 9.300H9.300V0.700z" fill="#1e1e1e"/><path d="M4.500 8.300H8.300V4.700z" fill="#555"/></symbol>
</defs></svg>
<div id="panel">
<div class="hdr" style="top:9.700px"><svg class="ic" style="left:4.500px;top:9px" width="13" height="10" viewBox="0 0 13 10"><path d="M0.300 5L6.200 1.200V8.800zM5.800 5L11.900 1.200V8.800z" fill="#2b2b2b"/></svg><span class="t">BROWSER</span>
<svg class="ic" style="left:334px;top:7.500px" width="14" height="14" viewBox="0 0 14 14"><circle cx="7" cy="7" r="6" fill="#fff"/><circle cx="7" cy="7" r="4.800" fill="#2a2a2a"/><rect x="3.400" y="6.300" width="7.200" height="1.400" fill="#ddd"/></svg>
<svg class="ic" style="left:353px;top:7px" width="8" height="16" viewBox="0 0 8 16"><rect x="1.800" y="0.300" width="1.500" height="13" fill="#aaa"/><rect x="4.600" y="3" width="1" height="8" fill="#999"/></svg></div>
<div id="sbtrack"></div><div id="sbthumb"></div>

<svg class="arr" style="top:52.1px" width="10" height="12"><use href="#i-ac"/></svg>
<div class="row" style="left:69.0px;top:46.6px;width:176.0px"><svg class="ic" style="left:3.0px;top:3.500px" width="20" height="16"><use href="#i-folder"/></svg><span class="t" style="left:39.5px">Benannte Ansichten</span></div>
<svg class="arr" style="top:81.0px" width="10" height="12"><use href="#i-ac"/></svg>
<div class="row" style="left:69.0px;top:75.5px;width:142.0px"><svg class="ic" style="left:3.0px;top:3.500px" width="20" height="16"><use href="#i-folder"/></svg><span class="t" style="left:39.5px">Auswahlsätze</span></div>
<svg class="arr" style="top:109.9px" width="10" height="12"><use href="#i-ac"/></svg>
<div class="row" style="left:69.0px;top:104.4px;width:144.0px"><svg class="ic" style="left:3.3px;top:5px" width="20" height="13"><use href="#i-hid"/></svg><svg class="ic" style="left:33.2px;top:3.500px" width="20" height="16"><use href="#i-folder"/></svg><span class="t" style="left:69.7px">Ursprung</span></div>
<svg class="arr" style="top:140.3px" width="10" height="10"><use href="#i-ao"/></svg>
<div class="row" style="left:69.0px;top:133.3px;width:133.5px"><svg class="ic" style="left:3.3px;top:5px" width="20" height="13"><use href="#i-vis"/></svg><svg class="ic" style="left:33.2px;top:3.500px" width="20" height="16"><use href="#i-folder"/></svg><span class="t" style="left:69.7px">Analyse</span></div>
<div class="row" style="left:90.5px;top:162.2px;width:133.5px"><svg class="ic" style="left:3.3px;top:5px" width="20" height="13"><use href="#i-hid"/></svg><svg class="ic" style="left:34.0px;top:1.800px" width="17" height="18"><use href="#i-sect"/></svg><span class="t" style="left:69.0px">Schnitt1</span></div>
<div class="row" style="left:90.5px;top:191.1px;width:133.5px"><svg class="ic" style="left:3.3px;top:5px" width="20" height="13"><use href="#i-vis"/></svg><svg class="ic" style="left:34.0px;top:1.800px" width="17" height="18"><use href="#i-sect"/></svg><span class="t" style="left:69.0px">Schnitt2</span></div>
<svg class="arr" style="top:225.5px" width="10" height="12"><use href="#i-ac"/></svg>
<div class="row" style="left:69.0px;top:220.0px;width:123.5px"><svg class="ic" style="left:3.3px;top:5px" width="20" height="13"><use href="#i-vis"/></svg><svg class="ic" style="left:33.2px;top:3.500px" width="20" height="16"><use href="#i-folder"/></svg><span class="t" style="left:69.7px">Körper</span></div>
<svg class="arr" style="top:255.9px" width="10" height="10"><use href="#i-ao"/></svg>
<div class="row" style="left:69.0px;top:248.9px;width:133.5px"><svg class="ic" style="left:3.3px;top:5px" width="20" height="13"><use href="#i-hid"/></svg><svg class="ic" style="left:33.2px;top:3.500px" width="20" height="16"><use href="#i-folder"/></svg><span class="t" style="left:69.7px">Skizzen</span></div>
<div class="row" style="left:90.5px;top:277.8px;width:133.5px"><svg class="ic" style="left:3.3px;top:5px" width="20" height="13"><use href="#i-hid"/></svg><svg class="ic" style="left:33.8px;top:2.500px" width="18" height="18"><use href="#i-sk"/></svg><span class="t" style="left:69.0px">Skizze1</span></div>
<div class="row" style="left:90.5px;top:306.7px;width:128.5px"><svg class="ic" style="left:3.3px;top:5px" width="20" height="13"><use href="#i-hid"/></svg><svg class="ic" style="left:34.0px;top:2.200px" width="20" height="19"><use href="#i-lk"/></svg><span class="t" style="left:69.0px">Skizze2</span></div>
<div class="row" style="left:90.5px;top:335.6px;width:128.5px"><svg class="ic" style="left:3.3px;top:5px" width="20" height="13"><use href="#i-hid"/></svg><svg class="ic" style="left:34.0px;top:2.200px" width="20" height="19"><use href="#i-lk"/></svg><span class="t" style="left:69.0px">Skizze3</span></div>
<div class="row" style="left:90.5px;top:364.5px;width:133.5px"><svg class="ic" style="left:3.3px;top:5px" width="20" height="13"><use href="#i-hid"/></svg><svg class="ic" style="left:33.8px;top:2.500px" width="18" height="18"><use href="#i-sk"/></svg><span class="t" style="left:69.0px">Skizze4</span></div>
<div class="row" style="left:90.5px;top:393.4px;width:128.5px"><svg class="ic" style="left:3.3px;top:5px" width="20" height="13"><use href="#i-hid"/></svg><svg class="ic" style="left:33.8px;top:2.500px" width="18" height="18"><use href="#i-sk"/></svg><span class="t" style="left:69.0px">Skizze5</span></div>
<div class="row" style="left:90.5px;top:422.3px;width:138.5px"><svg class="ic" style="left:3.3px;top:5px" width="20" height="13" opacity=".32"><use href="#i-vis"/></svg><svg class="ic" style="left:33.8px;top:2.500px" width="18" height="18"><use href="#i-sk"/></svg><span class="t" style="left:69.0px">Skizze12</span></div>
<div class="row" style="left:90.5px;top:451.2px;width:133.5px"><svg class="ic" style="left:3.3px;top:5px" width="20" height="13" opacity=".32"><use href="#i-vis"/></svg><svg class="ic" style="left:33.8px;top:2.500px" width="18" height="18"><use href="#i-sk"/></svg><span class="t" style="left:69.0px">Skizze6</span></div>
<div class="row" style="left:90.5px;top:480.1px;width:133.5px"><svg class="ic" style="left:3.3px;top:5px" width="20" height="13" opacity=".32"><use href="#i-vis"/></svg><svg class="ic" style="left:33.8px;top:2.500px" width="18" height="18"><use href="#i-sk"/></svg><span class="t" style="left:69.0px">Skizze7</span></div>
<div class="row" style="left:90.5px;top:509.0px;width:133.5px"><svg class="ic" style="left:3.3px;top:5px" width="20" height="13" opacity=".32"><use href="#i-vis"/></svg><svg class="ic" style="left:33.8px;top:2.500px" width="18" height="18"><use href="#i-sk"/></svg><span class="t" style="left:69.0px">Skizze8</span></div>
<div class="row" style="left:90.5px;top:537.9px;width:133.5px"><svg class="ic" style="left:3.3px;top:5px" width="20" height="13" opacity=".32"><use href="#i-vis"/></svg><svg class="ic" style="left:33.8px;top:2.500px" width="18" height="18"><use href="#i-sk"/></svg><span class="t" style="left:69.0px">Skizze9</span></div>
<div class="row" style="left:90.5px;top:566.8px;width:138.5px"><svg class="ic" style="left:3.3px;top:5px" width="20" height="13" opacity=".32"><use href="#i-vis"/></svg><svg class="ic" style="left:33.8px;top:2.500px" width="18" height="18"><use href="#i-sk"/></svg><span class="t" style="left:69.0px">Skizze10</span></div>
<div class="row" style="left:90.5px;top:595.7px;width:138.5px"><svg class="ic" style="left:3.3px;top:5px" width="20" height="13" opacity=".32"><use href="#i-vis"/></svg><svg class="ic" style="left:34.0px;top:2.200px" width="20" height="19"><use href="#i-lk"/></svg><span class="t" style="left:69.0px">Skizze11</span></div>
<div class="row" style="left:90.5px;top:624.6px;width:138.5px"><svg class="ic" style="left:3.3px;top:5px" width="20" height="13"><use href="#i-hid"/></svg><svg class="ic" style="left:33.8px;top:2.500px" width="18" height="18"><use href="#i-sk"/></svg><span class="t" style="left:69.0px">Skizze16</span></div>
<div class="row" style="left:90.5px;top:653.5px;width:138.5px"><svg class="ic" style="left:3.3px;top:5px" width="20" height="13" opacity=".32"><use href="#i-vis"/></svg><svg class="ic" style="left:33.8px;top:2.500px" width="18" height="18"><use href="#i-sk"/></svg><span class="t" style="left:69.0px">Skizze13</span></div>
<div class="row" style="left:90.5px;top:682.4px;width:138.5px"><svg class="ic" style="left:3.3px;top:5px" width="20" height="13" opacity=".32"><use href="#i-vis"/></svg><svg class="ic" style="left:33.8px;top:2.500px" width="18" height="18"><use href="#i-sk"/></svg><span class="t" style="left:69.0px">Skizze14</span></div>
<div class="hdr" style="top:732.500px"><span class="t" style="transform:scaleX(.912)">KOMMENTARE</span>
<svg class="ic" style="left:334px;top:7.500px" width="14" height="14" viewBox="0 0 14 14"><circle cx="7" cy="7" r="6" fill="#fff"/><circle cx="7" cy="7" r="4.800" fill="#2a2a2a"/><rect x="3.400" y="6.300" width="7.200" height="1.400" fill="#eee"/><rect x="6.300" y="3.400" width="1.400" height="7.200" fill="#eee"/></svg>
<svg class="ic" style="left:353px;top:7px" width="8" height="16" viewBox="0 0 8 16"><rect x="1.800" y="0.300" width="1.500" height="13" fill="#aaa"/><rect x="4.600" y="3" width="1" height="8" fill="#999"/></svg></div>
</div>
<style>
#tb{position:absolute;left:628px;top:731.500px;width:286px;height:28px;background:#f0f0f0}
#tb svg{position:absolute;left:0;top:0}
</style>
<div id="tb"><svg width="286" height="28" viewBox="628 731.500 286 28">
<defs><linearGradient id="tbg" x1="0" y1="0" x2="0" y2="1"><stop offset="0" stop-color="#86a8de"/><stop offset="1" stop-color="#a9c2ea"/></linearGradient>
<linearGradient id="tgg" x1="0" y1="0" x2="0" y2="1"><stop offset="0" stop-color="#ffffff"/><stop offset=".45" stop-color="#f0f0f2"/><stop offset="1" stop-color="#a2a2aa"/></linearGradient>
<linearGradient id="tlg" x1="0" y1="0" x2="1" y2="1"><stop offset="0" stop-color="#ffffff"/><stop offset="1" stop-color="#d4e4e4"/></linearGradient>
<linearGradient id="tcg" x1="0" y1="0" x2="0" y2="1"><stop offset="0" stop-color="#8a8c9c"/><stop offset="1" stop-color="#b8bac6"/></linearGradient>
<path id="dd" d="M0 0H7L3.500 4.300z" fill="#2a2a2a"/></defs>
<!-- orbit -->
<g fill="none" stroke="#7a7a7a" stroke-width="1.150"><ellipse cx="641.500" cy="745.700" rx="9.300" ry="4.700" transform="rotate(-6 641.500 745.700)"/><ellipse cx="641.500" cy="745.500" rx="4.400" ry="9.300" transform="rotate(10 641.500 745.500)"/></g>
<circle cx="641.600" cy="745.200" r="1.350" fill="#2f8fe8"/><circle cx="644" cy="739.900" r="1.050" fill="#333"/><circle cx="647.200" cy="742.800" r="1.050" fill="#333"/>
<use href="#dd" x="657.400" y="743.500"/>
<!-- look at -->
<path d="M674 742.300L677.800 737.900L680.500 738.600L680.500 740.200L685.300 738.300L685.300 742.300z" fill="#c8c8cc" stroke="#5e5e5e" stroke-width="1" stroke-linejoin="round"/>
<rect x="673.100" y="742.500" width="16.400" height="11" rx="1.200" fill="#ececec" stroke="#6c6c74" stroke-width="1.300"/>
<rect x="675.700" y="745" width="11.400" height="6.200" fill="url(#tcg)" stroke="#6c6c78" stroke-width=".8"/>
<!-- hand -->
<path d="M709.600 754.400C707.800 751.800 705.800 749.200 704.200 747.100C703.300 745.700 704.900 744.700 706.100 745.800L708.900 748.600V739.300C708.900 737.700 711.400 737.700 711.400 739.300V744.300V737.600C711.400 736 713.900 736 713.900 737.600V744.200V738.300C713.900 736.700 716.400 736.700 716.400 738.300V744.600L717.600 740.500C718 739 720.300 739.600 719.900 741.200C719.400 744.500 719.800 749.500 717.600 754.400z" fill="#fbfbfb" stroke="#6e6e6e" stroke-width="1" stroke-linejoin="round"/>
<path d="M711.400 739.300V744.800M713.900 737.600V744.500M716.400 738.300V744.800" stroke="#777" stroke-width=".8" fill="none"/>
<!-- zoom -->
<circle cx="741.500" cy="743" r="6.300" fill="url(#tlg)" stroke="#858585" stroke-width="1.300"/><path d="M746.300 747.900L752.200 753.200" stroke="#444" stroke-width="2.400" stroke-linecap="round"/>
<path d="M749 738H753.400M751.200 735.800V740.200M749 741.600H753.400" stroke="#555" stroke-width="1" fill="none"/>
<!-- zoom window -->
<rect x="766.300" y="736.900" width="18" height="17.400" fill="none" stroke="#8a8a8a" stroke-width=".9" stroke-dasharray="2.400 1.500"/>
<circle cx="773.400" cy="743.500" r="6.500" fill="url(#tlg)" stroke="#858585" stroke-width="1.300"/><path d="M778.300 748.500L783.300 753.300" stroke="#444" stroke-width="2.400" stroke-linecap="round"/>
<use href="#dd" x="791" y="743.500"/>
<!-- display -->
<rect x="806.300" y="736.500" width="17.600" height="13.600" rx="1" fill="#e0e0e0" stroke="#7c7c7c" stroke-width="1.100"/><rect x="808.600" y="738.400" width="13.200" height="9.800" fill="url(#tbg)" stroke="#5577bb" stroke-width=".7"/>
<path d="M813 750.400H817.200L818.300 752.800H811.900z" fill="#9a9a9a"/><rect x="810" y="752.800" width="10" height="1.600" rx=".6" fill="#a8a8a8"/>
<use href="#dd" x="827.600" y="743.500"/>
<!-- grid -->
<rect x="843.300" y="736.900" width="17.800" height="17.600" rx="1" fill="url(#tgg)" stroke="#808080" stroke-width="1"/>
<path d="M845.850 736.900V754.500M848.400 736.900V754.500M850.950 736.900V754.500M853.500 736.900V754.500M856.050 736.900V754.500M858.600 736.900V754.500M843.300 739.400H861.100M843.300 741.900H861.100M843.300 744.400H861.100M843.300 746.900H861.100M843.300 749.400H861.100M843.300 751.900H861.100" stroke="#8a8a8e" stroke-width=".8" fill="none"/>
<use href="#dd" x="864.900" y="743.500"/>
<!-- viewports -->
<rect x="881" y="738.100" width="17.400" height="15" rx=".8" fill="#8cacdf" stroke="#5c82c8" stroke-width=".9"/>
<path d="M889.700 738.100V753.100M881 745.600H898.400" stroke="#4f74ba" stroke-width=".9" fill="none"/>
<use href="#dd" x="902.100" y="743.500"/>
</svg></div>

</body></html>
